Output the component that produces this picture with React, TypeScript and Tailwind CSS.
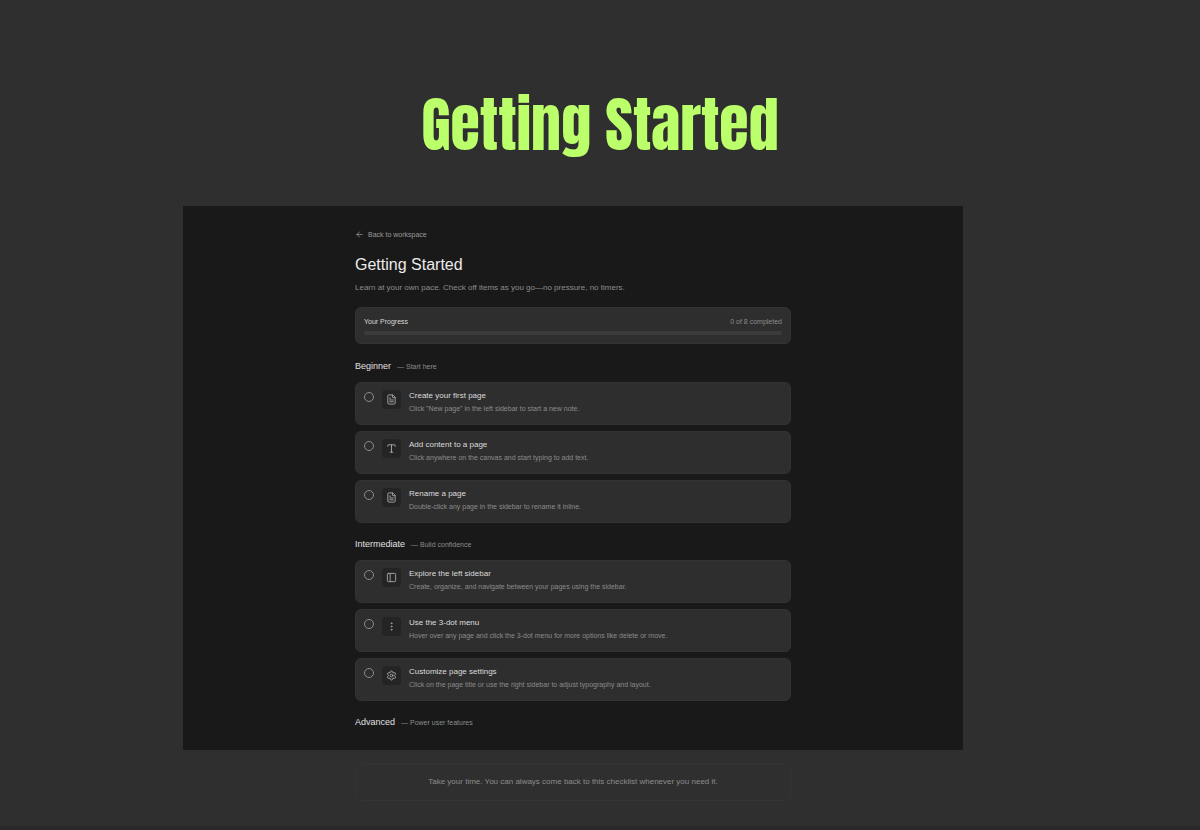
import { useState } from 'react';
import { ArrowLeft, FileText, Type, PanelLeft, MoreVertical, Settings } from 'lucide-react';
import type { LucideIcon } from 'lucide-react';

type Item = { id: string; icon: LucideIcon; title: string; text: string };
type Section = { name: string; hint: string; items: Item[] };

const TOTAL = 8;

const sections: Section[] = [
  {
    name: 'Beginner',
    hint: 'Start here',
    items: [
      { id: 'create', icon: FileText, title: 'Create your first page', text: 'Click "New page" in the left sidebar to start a new note.' },
      { id: 'content', icon: Type, title: 'Add content to a page', text: 'Click anywhere on the canvas and start typing to add text.' },
      { id: 'rename', icon: FileText, title: 'Rename a page', text: 'Double-click any page in the sidebar to rename it inline.' },
    ],
  },
  {
    name: 'Intermediate',
    hint: 'Build confidence',
    items: [
      { id: 'sidebar', icon: PanelLeft, title: 'Explore the left sidebar', text: 'Create, organize, and navigate between your pages using the sidebar.' },
      { id: 'menu', icon: MoreVertical, title: 'Use the 3-dot menu', text: 'Hover over any page and click the 3-dot menu for more options like delete or move.' },
      { id: 'settings', icon: Settings, title: 'Customize page settings', text: 'Click on the page title or use the right sidebar to adjust typography and layout.' },
    ],
  },
  { name: 'Advanced', hint: 'Power user features', items: [] },
];

const ChecklistItem = ({ item, checked, onToggle }: { item: Item; checked: boolean; onToggle: () => void }) => (
  <li className="flex h-[43px] items-start rounded-md border border-[#323232] bg-[#2e2e2e] px-2 pt-[7px]">
    <input
      id={item.id}
      type="checkbox"
      checked={checked}
      onChange={onToggle}
      className="mt-0.5 size-[10px] shrink-0 cursor-pointer appearance-none rounded-full border border-[#8c8c8c] checked:bg-[#bbff6b]"
    />
    <span className="ml-2 flex size-[19px] shrink-0 items-center justify-center rounded bg-[#242424]">
      <item.icon size={11} strokeWidth={2} className="text-[#a8a8a8]" />
    </span>
    <div className="ml-2 min-w-0">
      <label htmlFor={item.id} className="block cursor-pointer text-[8px] leading-[11px] text-[#dcdcdc]">
        {item.title}
      </label>
      <p className="mt-0.5 text-[7px] leading-[11px] text-[#8c8c8c]">{item.text}</p>
    </div>
  </li>
);

const App = () => {
  const [done, setDone] = useState<string[]>([]);

  const toggle = (id: string) => {
    setDone(prev => (prev.includes(id) ? prev.filter(d => d !== id) : [...prev, id]));
  };

  return (
    <div className="min-h-screen border-b-4 border-[#2a272a] bg-[#2f2f2f] font-['Liberation_Sans',Arial,sans-serif]">
      <h1 className="pt-20 text-center font-['Anton','Liberation_Sans_Narrow','DejaVu_Sans_Condensed',sans-serif] text-[60px] leading-[90px] font-normal text-[#bbff6b]">
        Getting Started
      </h1>

      <div className="mt-9 pr-[54px]">
        <main className="mx-auto max-w-[780px] bg-[#191919] pb-5">
          <div className="mx-auto max-w-[436px] pt-[23px]">
            <a href="#" className="flex items-center gap-1 text-[7px] leading-[11px] text-[#9a9a9a]">
              <ArrowLeft size={9} />
              Back to workspace
            </a>
            <h2 className="mt-[13px] text-[16px] leading-6 text-[#ebebeb]">Getting Started</h2>
            <p className="mt-1 text-[8px] leading-[14px] text-[#8c8c8c]">
              Learn at your own pace. Check off items as you go—no pressure, no timers.
            </p>

            <div className="mt-3 rounded-md border border-[#323232] bg-[#2e2e2e] px-2 pt-2 pb-2">
              <div className="flex justify-between leading-[11px]">
                <span className="text-[7px] text-[#d8d8d8]">Your Progress</span>
                <span className="text-[7px] text-[#8c8c8c]">{done.length} of {TOTAL} completed</span>
              </div>
              <div className="mt-1 h-1 overflow-hidden rounded-full bg-[#3b3b3b]">
                <div className="h-full bg-[#bbff6b]" style={{ width: `${(done.length / TOTAL) * 100}%` }} />
              </div>
            </div>

            <div className="mt-[15px] flex flex-col gap-3.5">
              {sections.map(section => (
                <section key={section.name}>
                  <h3 className="flex items-baseline gap-1.5 text-[9px] leading-[14px] text-[#e0e0e0]">
                    {section.name}
                    <span className="text-[7px] text-[#8c8c8c]">— {section.hint}</span>
                  </h3>
                  {section.items.length > 0 && (
                    <ul className="mt-2 flex flex-col gap-1.5">
                      {section.items.map(item => (
                        <ChecklistItem
                          key={item.id}
                          item={item}
                          checked={done.includes(item.id)}
                          onToggle={() => toggle(item.id)}
                        />
                      ))}
                    </ul>
                  )}
                </section>
              ))}
            </div>
          </div>
        </main>

        <p className="mx-auto mt-[13px] max-w-[436px] rounded-md border border-[#343434] py-3 text-center text-[8px] leading-3 text-[#8c8c8c]">
          Take your time. You can always come back to this checklist whenever you need it.
        </p>
      </div>
    </div>
  );
};

export default App;
